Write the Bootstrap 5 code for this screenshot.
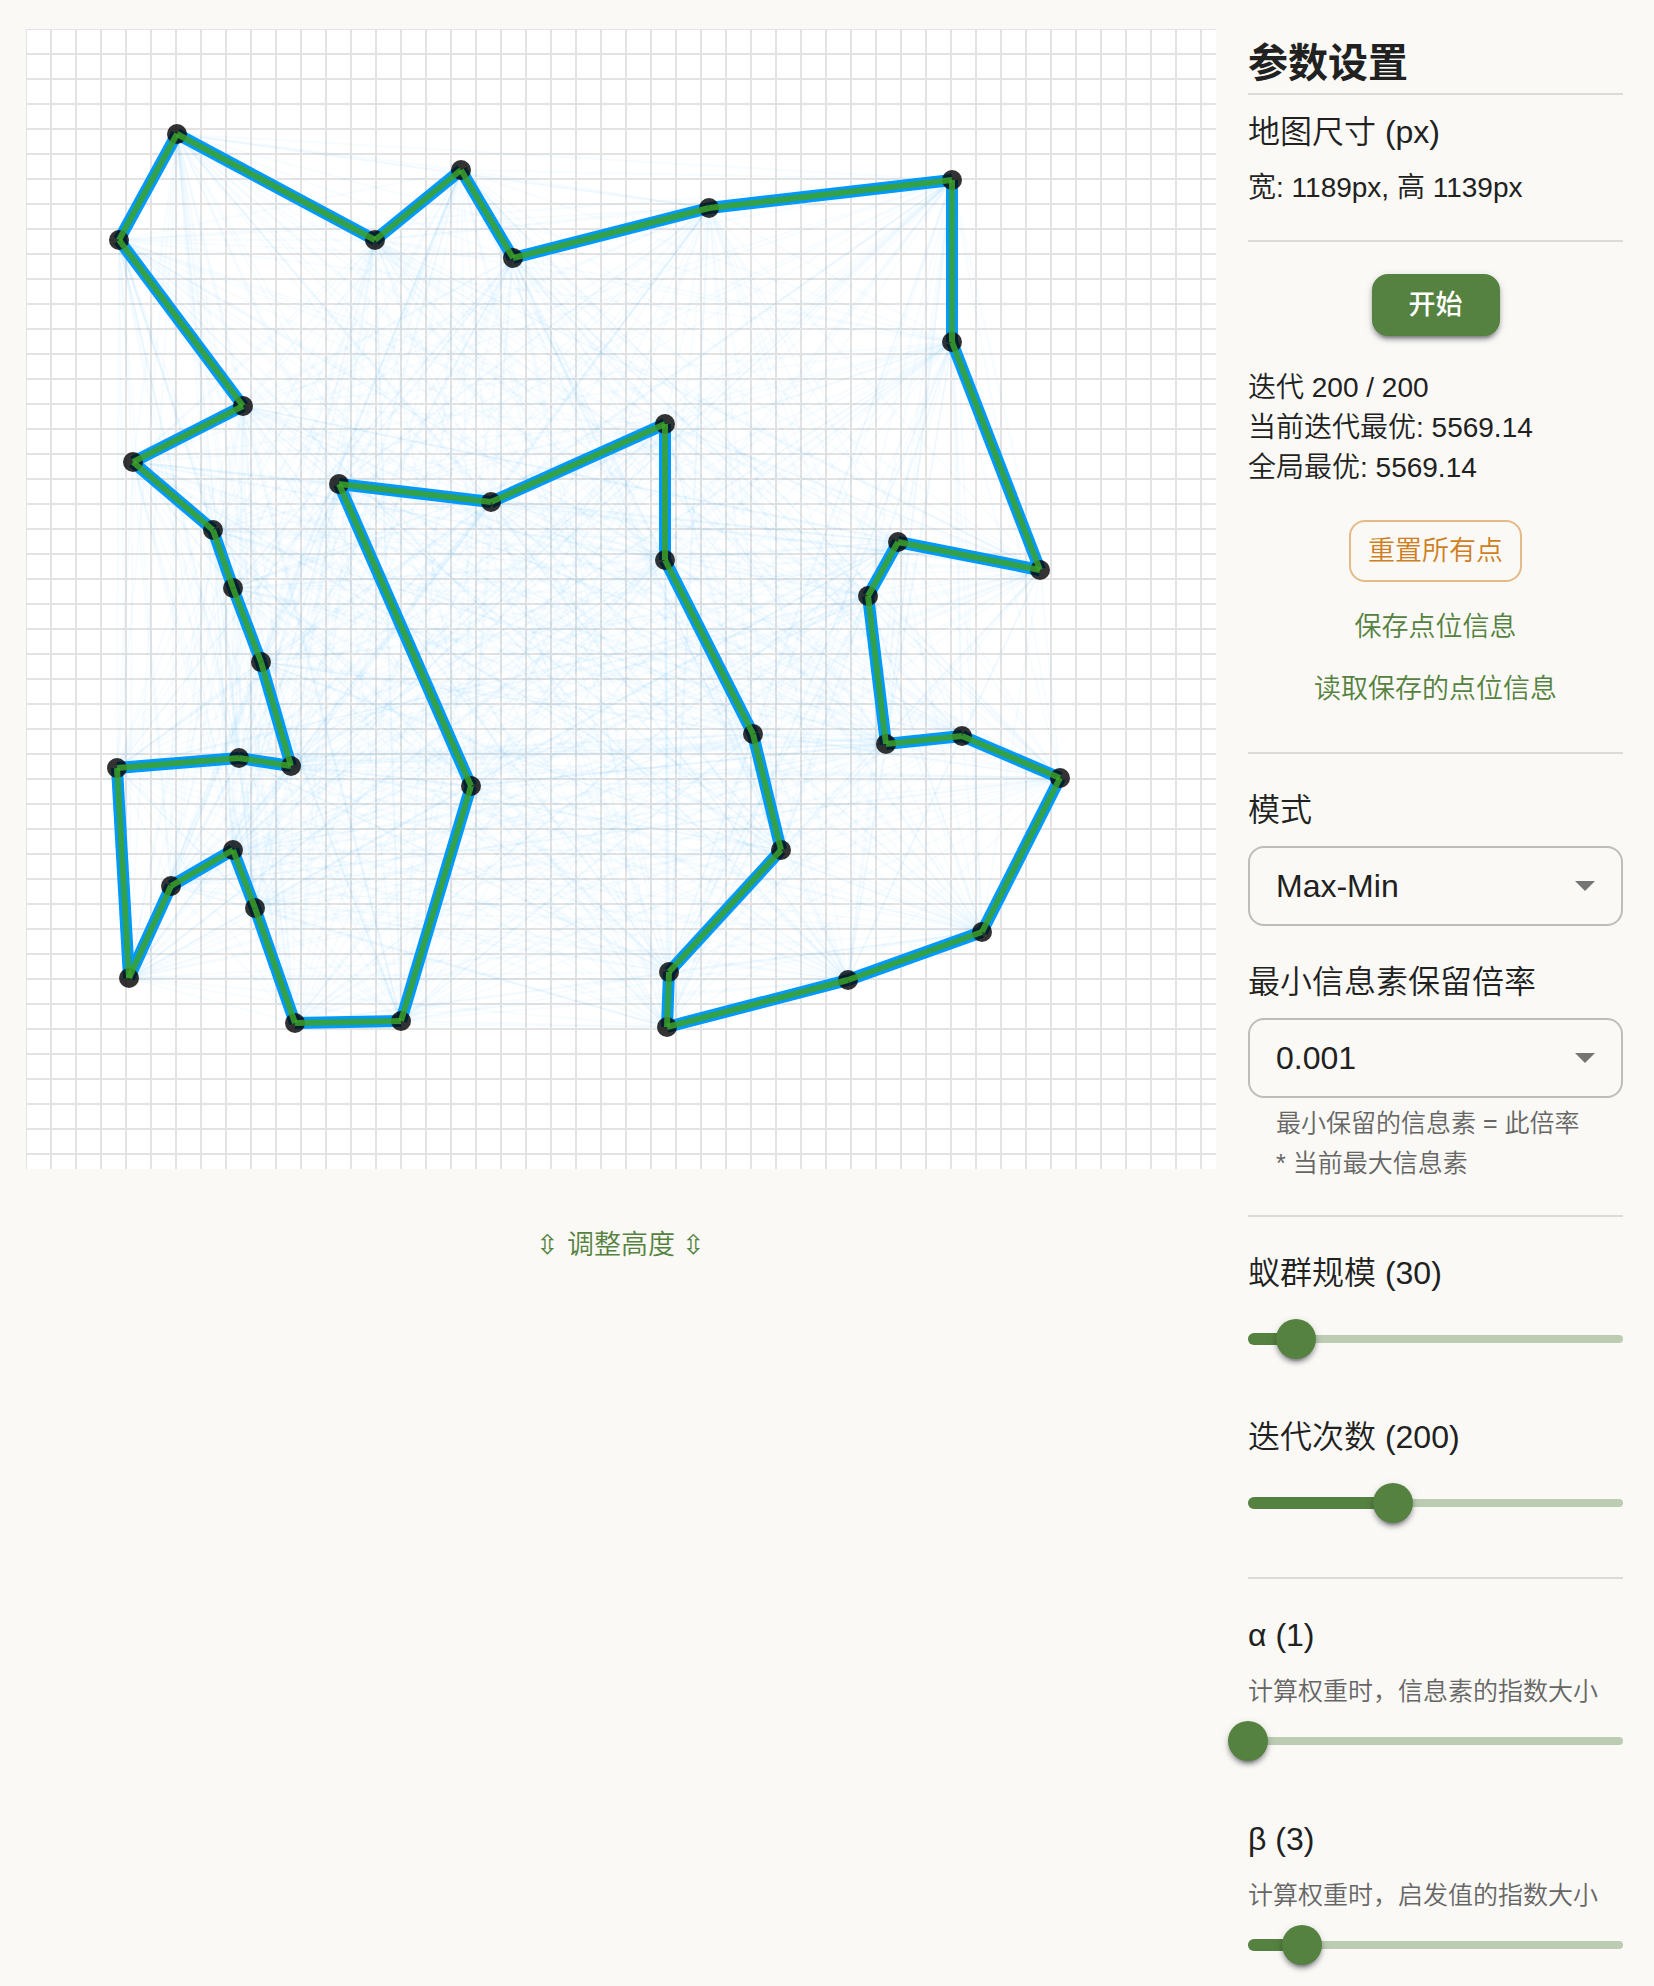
<!DOCTYPE html>
<html lang="zh-CN">
<head>
<meta charset="utf-8">
<meta name="viewport" content="width=device-width, initial-scale=1">
<title>蚁群算法</title>
<link rel="stylesheet" href="https://cdn.jsdelivr.net/npm/bootstrap@5.3.0/dist/css/bootstrap.min.css">
<style>
  :root { --leaf: #558240; --amber: #cf7f23; --ink: #212121; }
  body { background: #faf9f5; color: var(--ink); font-family: "Liberation Sans", "Noto Sans CJK SC", sans-serif; font-size: 28px; line-height: 40px; font-weight: 350; }
  .page { padding: 29px 31px 20px 26px; gap: 32px; }
  .map { display: block; width: 100%; height: 1140px; background: #fff; }
  .resize { margin-top: 45px; }
  .side { flex: 0 0 375px; }
  .side-title { font-size: 40px; line-height: 60px; font-weight: 700; margin: 0; padding-top: 4px; }
  .label-lg { display: block; font-size: 32px; line-height: 48px; font-weight: 350; margin: 0 0 12px; }
  .rule { height: 2px; background: #dcdbd8; border: 0; opacity: 1; margin: 32px 0; }
  .rule-title { margin: 0 0 13px; }
  .hint { font-size: 25px; line-height: 40px; color: #666; }
  .hint-inset { padding: 0 28px; margin-top: 5px; }
  .act { font-size: 27px; line-height: 48px; font-weight: 350; border: 0; border-radius: 16px; padding: 7px 18px; color: var(--leaf); }
  .act:hover { color: var(--leaf); background: #5582401a; }
  .act-main, .act-main:hover { background: var(--leaf); color: #fff; font-weight: 500; width: 128px; box-shadow: 0 6px 2px -4px #0003, 0 4px 4px #0024, 0 2px 10px #0000001f; }
  .act-reset { border: 2px solid #e5ba88; color: var(--amber); padding: 5px 17px; margin-bottom: 14px; }
  .stats { margin: 32px 0; }
  .pick { height: 80px; font-size: 32px; font-weight: 350; color: var(--ink); padding: 0 64px 0 26px; border: 2px solid #bdbdbb; border-radius: 16px; background-color: transparent;
    background-image: url("data:image/svg+xml,%3csvg xmlns='http://www.w3.org/2000/svg' viewBox='0 0 20 10'%3e%3cpath fill='%23757573' d='M0 0h20L10 10z'/%3e%3c/svg%3e"); background-size: 20px 10px; background-position: right 26px center; }
  .pick + .label-lg { margin-top: 32px; }
  .slide { display: grid; align-items: center; height: 40px; margin: 22px 0 54px; }
  .hint + .slide { margin-top: 10px; }
  .slide:last-child { margin-bottom: 0; }
  .slide > * { grid-area: 1 / 1; }
  .rail { height: 8px; border-radius: 4px; background: #bbccb2; }
  .fill { height: 12px; border-radius: 6px; background: var(--leaf); }
  .slide .form-range { width: calc(100% + 40px); height: 40px; margin: 0 -20px; }
  .form-range::-webkit-slider-runnable-track { height: 40px; background: none; }
  .form-range::-webkit-slider-thumb { width: 40px; height: 40px; margin: 0; border-radius: 50%; background: var(--leaf); box-shadow: 0 6px 2px -4px #0003, 0 4px 4px #0024, 0 2px 10px #0000001f; }
  .form-range::-webkit-slider-thumb:active { background: var(--leaf); }
</style>
</head>
<body>
<div class="page d-flex align-items-start">
  <main class="flex-grow-1 d-flex flex-column align-items-center">
    <svg class="map" id="map" role="img" aria-label="路径地图">
      <defs>
        <pattern id="cells" width="25" height="25" patternUnits="userSpaceOnUse">
          <path d="M0 0H25V25H0Z" fill="none" stroke="#e3e3e3" stroke-width="2"/>
        </pattern>
      </defs>
      <rect width="100%" height="100%" fill="url(#cells)"/>
    </svg>
    <button type="button" class="btn act resize">⇳ 调整高度 ⇳</button>
  </main>

  <aside class="side">
    <h1 class="side-title">参数设置</h1>
    <hr class="rule rule-title">
    <h2 class="label-lg">地图尺寸 (px)</h2>
    <p class="mb-0">宽: 1189px, 高 1139px</p>
    <hr class="rule">

    <div class="text-center"><button type="button" class="btn act act-main d-block mx-auto">开始</button></div>
    <div class="stats">
      <div>迭代 200 / 200</div>
      <div>当前迭代最优: 5569.14</div>
      <div>全局最优: 5569.14</div>
    </div>
    <div class="d-flex flex-column align-items-center">
      <button type="button" class="btn act act-reset">重置所有点</button>
      <button type="button" class="btn act">保存点位信息</button>
      <button type="button" class="btn act">读取保存的点位信息</button>
    </div>
    <hr class="rule">

    <div>
      <label class="label-lg" for="mode">模式</label>
      <select class="form-select pick" id="mode"><option>Max-Min</option></select>
      <label class="label-lg" for="keep">最小信息素保留倍率</label>
      <select class="form-select pick" id="keep" aria-describedby="keepHint"><option>0.001</option></select>
      <div class="hint hint-inset" id="keepHint">最小保留的信息素 = 此倍率 * 当前最大信息素</div>
    </div>
    <hr class="rule">

    <label class="label-lg" for="ants">蚁群规模 (30)</label>
    <div class="slide"><span class="rail"></span><span class="fill" style="width:12.9%"></span><input class="form-range" type="range" id="ants" min="1" max="226" value="30"></div>
    <label class="label-lg" for="iter">迭代次数 (200)</label>
    <div class="slide"><span class="rail"></span><span class="fill" style="width:38.8%"></span><input class="form-range" type="range" id="iter" min="10" max="500" value="200"></div>
    <hr class="rule">

    <label class="label-lg" for="alpha">α (1)</label>
    <div class="hint">计算权重时，信息素的指数大小</div>
    <div class="slide"><span class="rail"></span><input class="form-range" type="range" id="alpha" min="1" max="15" value="1"></div>
    <label class="label-lg" for="beta">β (3)</label>
    <div class="hint">计算权重时，启发值的指数大小</div>
    <div class="slide"><span class="rail"></span><span class="fill" style="width:14.3%"></span><input class="form-range" type="range" id="beta" min="1" max="15" value="3"></div>
  </aside>
</div>
<script src="https://cdn.jsdelivr.net/npm/bootstrap@5.3.0/dist/js/bootstrap.bundle.min.js"></script>
<script>
  // Cities in tour order, in map coordinates
  const tour = [[151,105],[93,211],[217,377],[107,433],[187,501],[207,559],[235,633],[265,737],[213,729],[91,739],[103,949],[145,857],[207,821],[229,879],[269,994],[375,992],[445,757],[313,455],[465,473],[639,395],[639,531],[727,705],[755,821],[643,943],[641,998],[822,951],[956,903],[1034,749],[936,707],[860,715],[842,567],[872,513],[1014,541],[926,313],[926,151],[683,179],[487,229],[435,141],[349,211]];
  const map = document.getElementById('map');
  function add(tag, attrs) {
    const el = document.createElementNS('http://www.w3.org/2000/svg', tag);
    for (const k in attrs) el.setAttribute(k, attrs[k]);
    map.appendChild(el);
  }
  const seg = (a, b) => 'M' + a + 'L' + b;
  // Weak pheromone between every pair of cities
  tour.forEach((a, i) => tour.slice(i + 1).forEach((b, j) => {
    add('path', { d: seg(a, b), stroke: '#0099ff', 'stroke-width': 2, 'stroke-opacity': (i * 7 + j * 13) % 17 === 0 ? .06 : .03 });
  }));
  const edges = tour.map((p, i) => seg(p, tour[(i + 1) % tour.length]));
  edges.forEach(d => add('path', { d, stroke: '#0099ff', 'stroke-width': 12 }));
  tour.forEach(p => add('circle', { cx: p[0], cy: p[1], r: 10, fill: '#000', 'fill-opacity': .8 }));
  edges.forEach(d => add('path', { d, stroke: '#3ca12a', 'stroke-width': 6, 'stroke-opacity': .85 }));
</script>
</body>
</html>
